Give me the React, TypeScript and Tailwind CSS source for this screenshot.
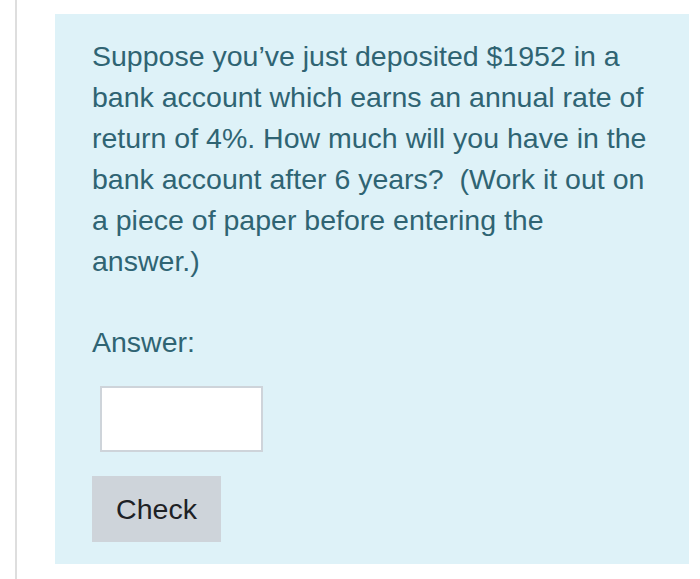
export default function App() {
  return (
    <div className="w-[700px] h-[579px] bg-white relative overflow-hidden font-['Liberation_Sans',Arial,sans-serif]">
      <div className="absolute left-[15px] top-0 bottom-0 w-[2px] bg-[#dedede]" />
      <div className="ml-[55px] mt-[14px] w-[634px] h-[550px] bg-[#def2f8] pl-[37px] pr-[10px] pt-[22px]">
        <p className="text-[28.5px] leading-[41px] text-[#2f6473] whitespace-nowrap">
          Suppose you’ve just deposited $1952 in a<br />
          bank account which earns an annual rate of<br />
          return of 4%. How much will you have in the<br />
          bank account after 6 years?&nbsp; (Work it out on<br />
          a piece of paper before entering the<br />
          answer.)
        </p>
        <p className="mt-[40px] text-[28.5px] leading-[41px] text-[#2f6473]">Answer:</p>
        <div className="mt-[23px] ml-[8px] w-[163px] h-[66px] bg-white border-2 border-[#ced4da]" />
        <button className="mt-[24px] w-[129px] h-[66px] bg-[#ced4da] text-[28.5px] text-[#1d2125]">Check</button>
      </div>
    </div>
  );
}
